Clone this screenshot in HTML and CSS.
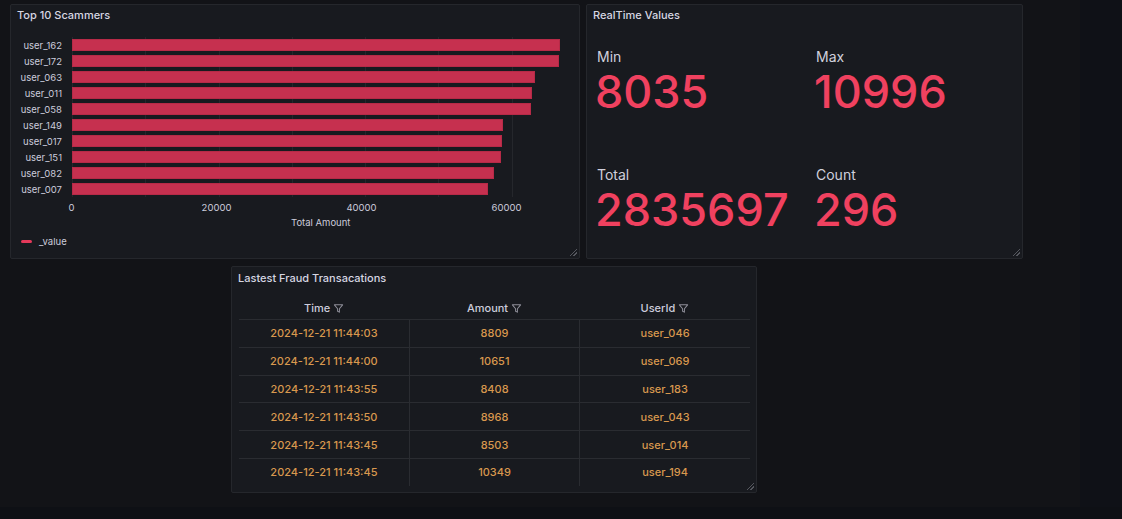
FILE: index.html
```html
<!DOCTYPE html>
<html>
<head>
<meta charset="utf-8">
<link rel="stylesheet" href="styles.css">
</head>
<body>
<div class="row-top">
  <section class="panel panel-bar">
    <h2 class="panel-title">Top 10 Scammers</h2>
    <div class="chart">
      <div class="bars">
        <div class="bar-row"><span class="bar-label">user_162</span><div class="plot"><div class="bar" style="width:97.6%"></div></div></div>
        <div class="bar-row"><span class="bar-label">user_172</span><div class="plot"><div class="bar" style="width:97.4%"></div></div></div>
        <div class="bar-row"><span class="bar-label">user_063</span><div class="plot"><div class="bar" style="width:92.6%"></div></div></div>
        <div class="bar-row"><span class="bar-label">user_011</span><div class="plot"><div class="bar" style="width:92%"></div></div></div>
        <div class="bar-row"><span class="bar-label">user_058</span><div class="plot"><div class="bar" style="width:91.8%"></div></div></div>
        <div class="bar-row"><span class="bar-label">user_149</span><div class="plot"><div class="bar" style="width:86.2%"></div></div></div>
        <div class="bar-row"><span class="bar-label">user_017</span><div class="plot"><div class="bar" style="width:86%"></div></div></div>
        <div class="bar-row"><span class="bar-label">user_151</span><div class="plot"><div class="bar" style="width:85.8%"></div></div></div>
        <div class="bar-row"><span class="bar-label">user_082</span><div class="plot"><div class="bar" style="width:84.4%"></div></div></div>
        <div class="bar-row"><span class="bar-label">user_007</span><div class="plot"><div class="bar" style="width:83.2%"></div></div></div>
      </div>
      <div class="axis">
        <span class="tick">0</span><span class="tick">20000</span><span class="tick">40000</span><span class="tick">60000</span>
      </div>
      <div class="axis-title">Total Amount</div>
    </div>
    <div class="legend"><span class="legend-swatch"></span><span>_value</span></div>
    <span class="resize"></span>
  </section>
  <section class="panel panel-stat">
    <h2 class="panel-title">RealTime Values</h2>
    <div class="stats">
      <div class="stat"><div class="stat-label">Min</div><div class="stat-value">8035</div></div>
      <div class="stat"><div class="stat-label">Max</div><div class="stat-value">10996</div></div>
      <div class="stat"><div class="stat-label">Total</div><div class="stat-value">2835697</div></div>
      <div class="stat"><div class="stat-label">Count</div><div class="stat-value">296</div></div>
    </div>
    <span class="resize"></span>
  </section>
</div>
<div class="row-bottom">
  <section class="panel panel-table">
    <h2 class="panel-title">Lastest Fraud Transacations</h2>
    <table class="tx">
      <thead>
        <tr>
          <th>Time <svg class="funnel" viewBox="0 0 12 12"><path d="M1.5 2h9L7 6.3V10L5 9V6.3Z"/></svg></th>
          <th>Amount <svg class="funnel" viewBox="0 0 12 12"><path d="M1.5 2h9L7 6.3V10L5 9V6.3Z"/></svg></th>
          <th>UserId <svg class="funnel" viewBox="0 0 12 12"><path d="M1.5 2h9L7 6.3V10L5 9V6.3Z"/></svg></th>
        </tr>
      </thead>
      <tbody>
        <tr><td>2024-12-21 11:44:03</td><td>8809</td><td>user_046</td></tr>
        <tr><td>2024-12-21 11:44:00</td><td>10651</td><td>user_069</td></tr>
        <tr><td>2024-12-21 11:43:55</td><td>8408</td><td>user_183</td></tr>
        <tr><td>2024-12-21 11:43:50</td><td>8968</td><td>user_043</td></tr>
        <tr><td>2024-12-21 11:43:45</td><td>8503</td><td>user_014</td></tr>
        <tr><td>2024-12-21 11:43:45</td><td>10349</td><td>user_194</td></tr>
      </tbody>
    </table>
    <span class="resize"></span>
  </section>
</div>
</body>
</html>
```

FILE: styles.css
```css
html {
  background:
    linear-gradient(to bottom, transparent 507px, #0e1015 507px),
    linear-gradient(to right, transparent 1080px, #0f1117 1080px),
    #121317;
  min-height: 100%;
}
body {
  margin: 0;
  padding-top: 4px;
  font-family: Inter, "Noto Sans", "Liberation Sans", sans-serif;
  color: #ccccdc;
  height: 515px;
  overflow: hidden;
}
.row-top {
  display: flex;
  gap: 6px;
  margin-left: 10px;
}
.row-bottom {
  display: flex;
  margin-left: 231px;
  margin-top: 7px;
}
.panel {
  position: relative;
  box-sizing: border-box;
  background: #181a1f;
  border: 1px solid #25272c;
  border-radius: 2px;
}
.panel-title {
  margin: 0;
  font-size: 11px;
  font-weight: 500;
  line-height: 14px;
  color: #d6d6e2;
  padding: 3px 0 0 6px;
}
.resize {
  position: absolute;
  right: 2px;
  bottom: 2px;
  width: 7px;
  height: 7px;
  background: linear-gradient(135deg, transparent 45%, #55575e 45%, #55575e 55%, transparent 55%, transparent 70%, #55575e 70%, #55575e 80%, transparent 80%);
}

/* Bar chart panel */
.panel-bar {
  width: 570px;
  height: 255px;
}
.chart {
  padding-top: 15px;
}
.bar-row {
  display: flex;
  height: 16px;
  align-items: center;
}
.bar-label {
  width: 51px;
  text-align: right;
  font-size: 9.5px;
  color: #ccccdc;
  margin-right: 10px;
}
.plot {
  width: 500px;
  height: 16px;
  display: flex;
  align-items: center;
  background-image: repeating-linear-gradient(to right, #25272c 0, #25272c 1px, transparent 1px, transparent 73.25px);
}
.bar {
  height: 12px;
  background: #c6304f;
  box-shadow: inset 0 0 0 1px #b72a47;
}
.axis {
  display: flex;
  margin-left: -12px;
  margin-top: 5px;
  height: 14px;
}
.tick {
  width: 146.5px;
  text-align: center;
  font-size: 9.5px;
  color: #ccccdc;
}
.axis-title {
  margin-left: 280px;
  font-size: 9.5px;
  color: #ccccdc;
  margin-top: 1px;
}
.legend {
  display: flex;
  align-items: center;
  gap: 7px;
  margin: 8px 0 0 10px;
  font-size: 9.5px;
  color: #ccccdc;
}
.legend-swatch {
  width: 11px;
  height: 3px;
  border-radius: 2px;
  background: #e4395a;
}

/* Stat panel */
.panel-stat {
  width: 437px;
  height: 255px;
}
.stats {
  display: grid;
  grid-template-columns: 219px 200px;
  grid-template-rows: 118px 100px;
  padding: 27px 0 0 8px;
}
.stat-label {
  font-size: 14px;
  line-height: 16px;
  color: #d0d0dc;
  padding-left: 2px;
}
.stat-value {
  font-size: 45px;
  font-weight: 500;
  line-height: 48px;
  color: #f0415f;
  margin-top: 3px;
}

/* Table panel */
.panel-table {
  width: 526px;
  height: 227px;
  padding-top: 1px;
}
.panel-table .panel-title {
  padding-top: 3px;
}
.tx {
  margin: 12px 0 0 7px;
  width: 511px;
  border-collapse: collapse;
  table-layout: fixed;
  font-size: 11px;
  font-weight: 500;
}
.tx th {
  height: 22px;
  padding: 0;
  text-align: center;
  color: #ccccdc;
  font-weight: 500;
  border-bottom: 1px solid #2a2c31;
}
.tx td {
  height: 26.8px;
  padding: 0;
  text-align: center;
  color: #d8984e;
  border-bottom: 1px solid #2a2c31;
  border-right: 1px solid #2a2c31;
}
.tx td:last-child {
  border-right: none;
}
.tx tr:last-child td {
  border-bottom: none;
}
.funnel {
  width: 11px;
  height: 11px;
  vertical-align: -2px;
  fill: none;
  stroke: #8e8e99;
  stroke-width: 1.1;
  stroke-linejoin: round;
}
```
